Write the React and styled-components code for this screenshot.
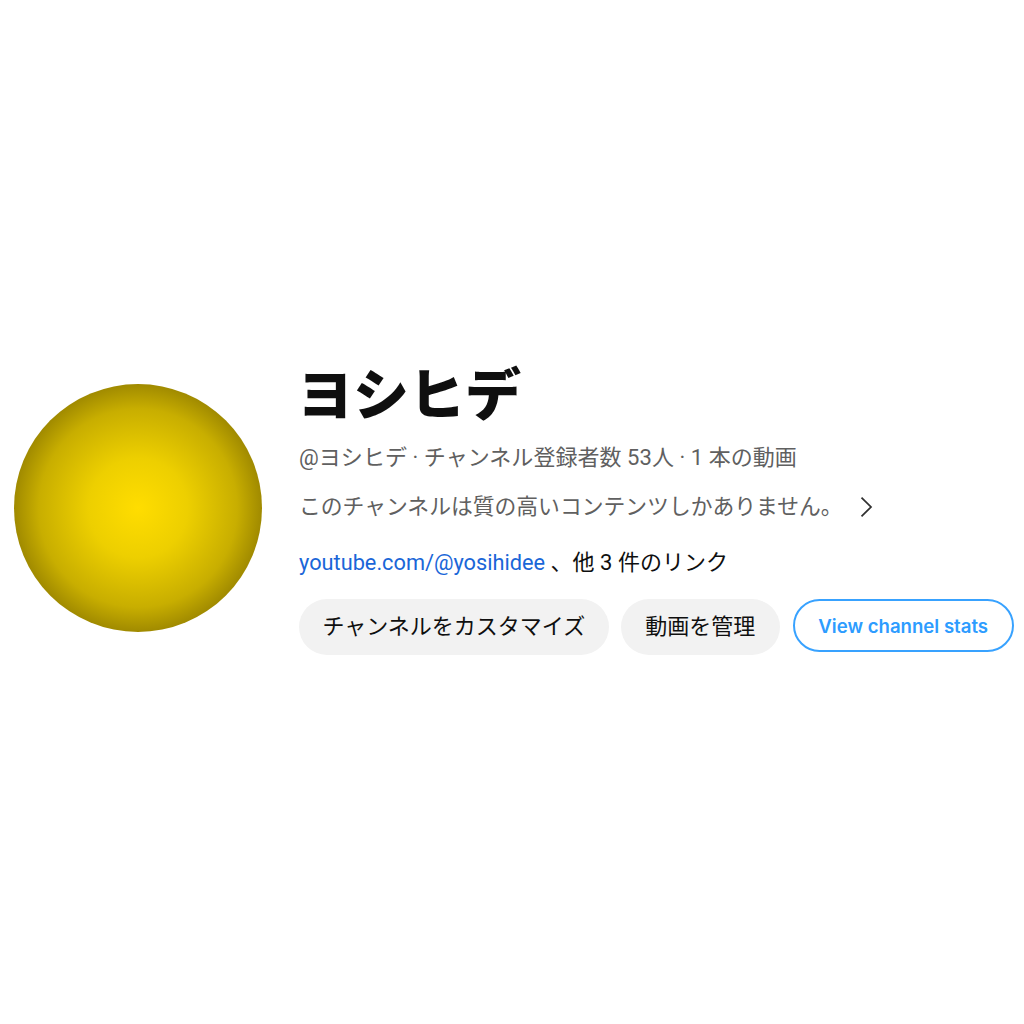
import styled, { createGlobalStyle } from "styled-components";

const GlobalStyle = createGlobalStyle`
  html, body {
    margin: 0;
    background: #fff;
  }
  body {
    font-family: Roboto, "Noto Sans CJK JP", sans-serif;
  }
`;

const App = () => {
  return (
    <>
      <GlobalStyle />
      <Page>
        <Header>
          <Avatar />
          <Info>
            <Title>ヨシヒデ</Title>
            <Meta>@ヨシヒデ · チャンネル登録者数 53人 · 1 本の動画</Meta>
            <DescRow>
              <Desc>このチャンネルは質の高いコンテンツしかありません。</Desc>
              <Chevron viewBox="0 0 24 24">
                <path d="M8.4 4.5 16 12l-7.6 7.5" />
              </Chevron>
            </DescRow>
            <Links>
              <LinkText href="#">youtube.com/@yosihidee</LinkText>
              <LinkMore> 、他 3 件のリンク</LinkMore>
            </Links>
            <Actions>
              <PillButton $pad={23.5}>チャンネルをカスタマイズ</PillButton>
              <PillButton $pad={24.5}>動画を管理</PillButton>
              <OutlineButton>View channel stats</OutlineButton>
            </Actions>
          </Info>
        </Header>
      </Page>
    </>
  );
};

const Page = styled.div`
  min-height: 1024px;
  padding-top: 362px;
  box-sizing: border-box;
`;

const Header = styled.div`
  display: flex;
  align-items: center;
  padding-left: 14px;
`;

const Avatar = styled.div`
  width: 248px;
  height: 248px;
  flex-shrink: 0;
  margin-bottom: 2px;
  border-radius: 50%;
  background: radial-gradient(circle closest-side at center, #ffdd00 0%, #edcf00 40%, #c8ae00 80%, #a08a00 100%);
`;

const Info = styled.div`
  display: flex;
  flex-direction: column;
  margin-left: 37px;
`;

const Title = styled.h1`
  margin: 1px 0 0 -2px;
  height: 66px;
  font-size: 56px;
  line-height: 66px;
  font-weight: 900;
  color: #0f0f0f;
`;

const Meta = styled.div`
  margin-top: 14px;
  font-size: 22px;
  line-height: 30px;
  letter-spacing: 0.05px;
  color: #606060;
`;

const DescRow = styled.div`
  display: flex;
  align-items: center;
  margin-top: 19px;
  height: 30px;
`;

const Desc = styled.span`
  font-size: 21.8px;
  line-height: 30px;
  color: #606060;
`;

const Chevron = styled.svg`
  width: 30px;
  height: 30px;
  margin-left: 8px;
  fill: none;
  stroke: #303030;
  stroke-width: 1.4;
`;

const Links = styled.div`
  margin-top: 26px;
  font-size: 22px;
  line-height: 30px;
`;

const LinkText = styled.a`
  color: #1a66d8;
  font-size: 21.75px;
  text-decoration: none;
`;

const LinkMore = styled.span`
  color: #0f0f0f;
`;

const Actions = styled.div`
  display: flex;
  align-items: flex-start;
  gap: 12px;
  margin-top: 21px;
`;

const PillButton = styled.button`
  height: 56px;
  padding: 0 ${({ $pad }) => $pad}px 6px;
  border: none;
  border-radius: 28px;
  background: #f2f2f2;
  color: #0f0f0f;
  font-family: Roboto, "Noto Sans CJK JP", sans-serif;
  font-size: 22px;
`;

const OutlineButton = styled.button`
  height: 53px;
  width: 221px;
  margin-left: 1px;
  border: 2px solid #38a2ff;
  border-radius: 27px;
  background: #fff;
  color: #2d9cff;
  font-family: Inter, sans-serif;
  font-size: 18.6px;
  font-weight: 600;
`;

export default App;
